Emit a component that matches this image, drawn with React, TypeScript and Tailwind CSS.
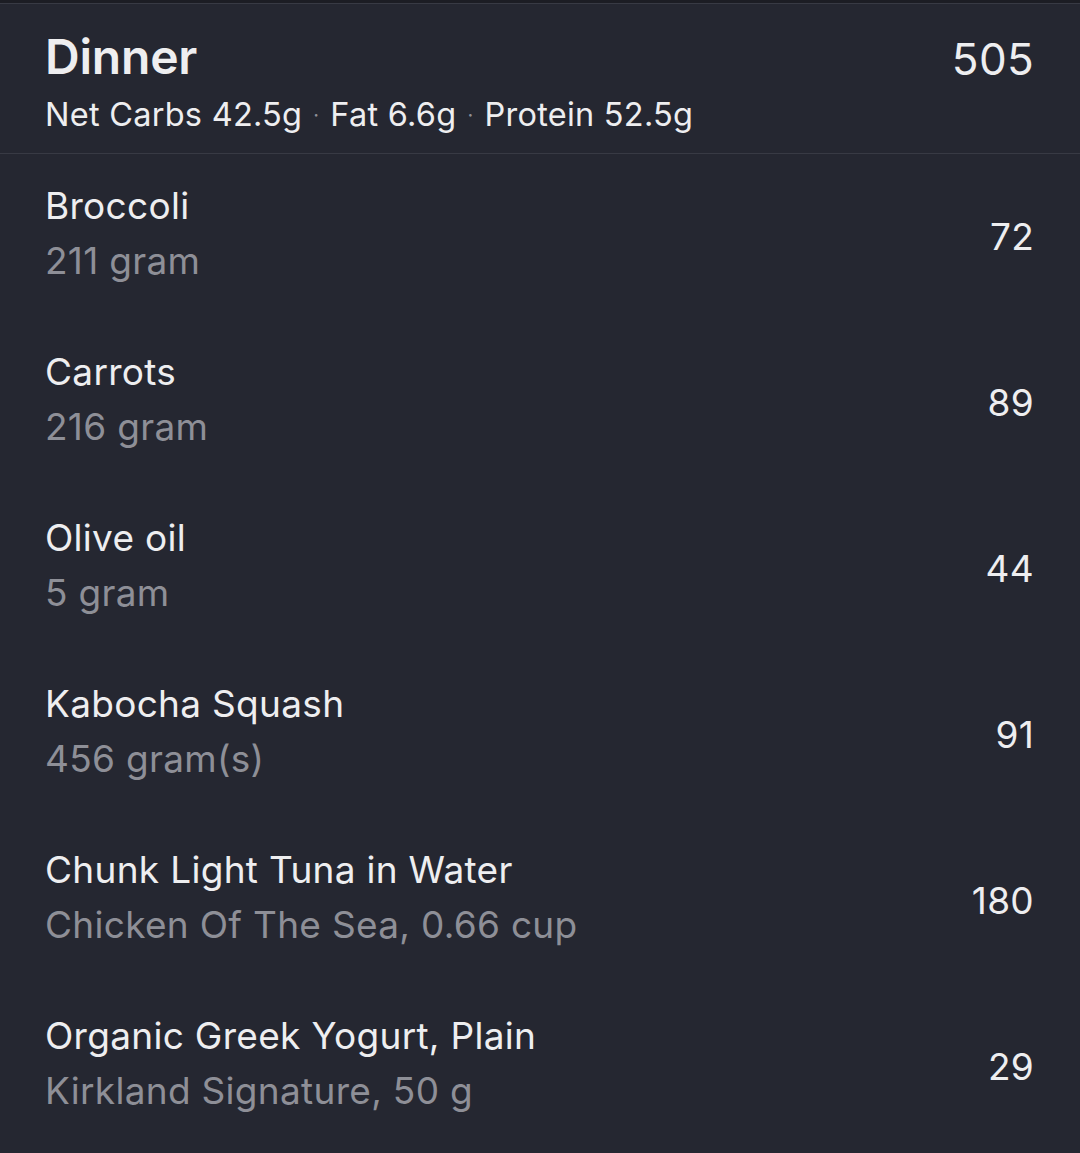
import React from "react";

const items = [
  { name: "Broccoli", detail: "211 gram", cal: "72" },
  { name: "Carrots", detail: "216 gram", cal: "89" },
  { name: "Olive oil", detail: "5 gram", cal: "44" },
  { name: "Kabocha Squash", detail: "456 gram(s)", cal: "91" },
  { name: "Chunk Light Tuna in Water", detail: "Chicken Of The Sea, 0.66 cup", cal: "180" },
  { name: "Organic Greek Yogurt, Plain", detail: "Kirkland Signature, 50 g", cal: "29" },
];

export default function App() {
  return (
    <div
      className="w-[1080px] h-[1153px] overflow-hidden bg-[#252731] text-[#eeeef0]"
      style={{ fontFamily: "Inter, 'Noto Sans', sans-serif" }}
    >
      <div className="h-[3px] bg-[#1c1d24]" />
      <div className="h-[1px] bg-[#383a44]" />
      <div className="flex justify-between border-b border-[#383a44] pl-[45px] pr-[46px] pt-[23px] h-[150px]">
        <div className="flex flex-col">
          <div className="text-[48px] font-semibold leading-[60px] tracking-[-0.2px]">Dinner</div>
          <div className="mt-[8px] text-[32.5px] leading-[40px] tracking-[0.25px] flex items-center">
            <span>Net Carbs 42.5g</span>
            <span className="text-[#8e8f97] mx-[11px] text-[20px]">·</span>
            <span>Fat 6.6g</span>
            <span className="text-[#8e8f97] mx-[11px] text-[20px]">·</span>
            <span>Protein 52.5g</span>
          </div>
        </div>
        <div className="text-[44px] leading-[60px] tracking-[0.3px] pt-[2px]">505</div>
      </div>
      {items.map((it) => (
        <div key={it.name} className="flex items-center justify-between pl-[45px] pr-[46px] h-[166px] pb-[8px]">
          <div className="flex flex-col tracking-[0.3px]">
            <div className="text-[37px] leading-[55px]">{it.name}</div>
            <div className="text-[37px] leading-[55px] text-[#8e8f97]">{it.detail}</div>
          </div>
          <div className="text-[37px] tracking-[0.3px] pt-[8px]">{it.cal}</div>
        </div>
      ))}
    </div>
  );
}
